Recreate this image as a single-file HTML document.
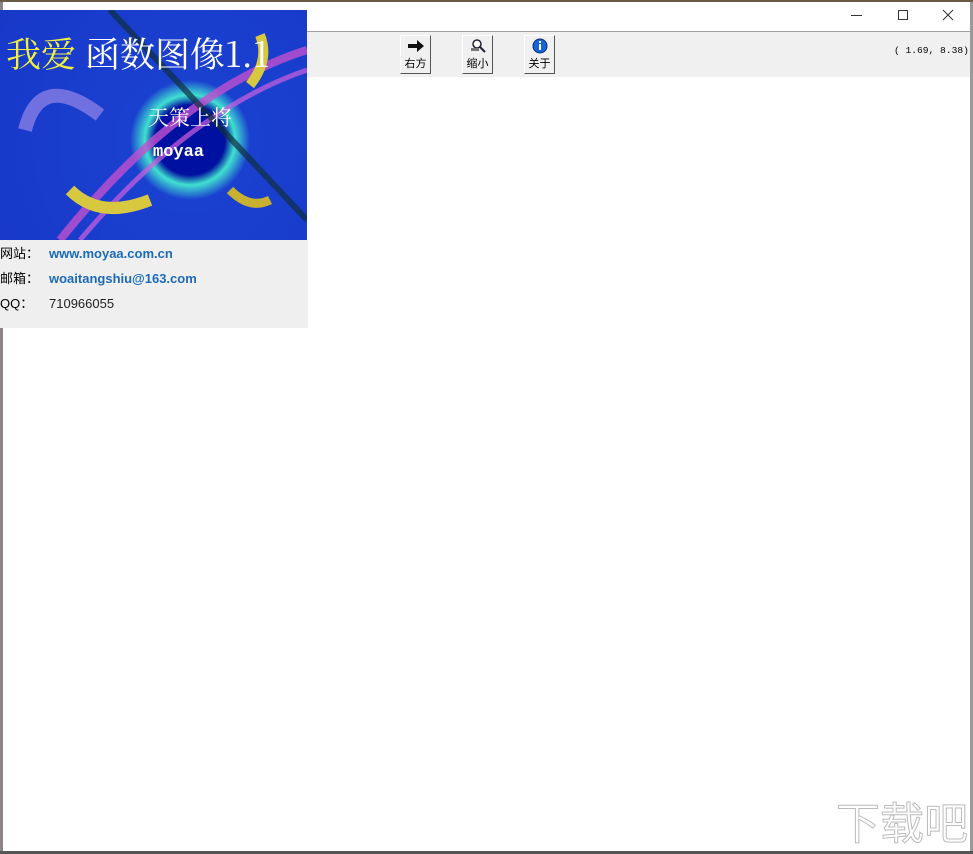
<!DOCTYPE html>
<html><head><meta charset="utf-8"><style>
*{margin:0;padding:0;box-sizing:border-box}
body{width:973px;height:854px;overflow:hidden;background:#fff;position:relative;font-family:"Liberation Sans","Noto Sans CJK SC",sans-serif}
.abs{position:absolute}
.btn{position:absolute;top:35px;width:31px;height:39px;background:#f0f0f0;border:1px solid;border-color:#fff #555 #555 #fff;font-size:11px;text-align:center;color:#000}
.btn .lbl{position:absolute;bottom:2px;left:0;right:0;line-height:13px}
.info{font-size:13px;position:absolute;left:0;line-height:16px;white-space:nowrap}
</style></head><body>
<div class="abs" style="left:0;top:0;width:973px;height:2px;background:#6b5a45"></div>
<div class="abs" style="left:0;top:2px;width:3px;height:852px;background:#8a8580"></div>
<div class="abs" style="left:970px;top:2px;width:3px;height:852px;background:#9a9a9a"></div>
<div class="abs" style="left:0;top:851px;width:973px;height:3px;background:#555"></div>
<div class="abs" style="left:3px;top:31px;width:967px;height:1px;background:#a0a0a0"></div>
<div class="abs" style="left:3px;top:32px;width:967px;height:45px;background:#f0f0f0"></div>
<div class="abs" style="left:851px;top:15px;width:11px;height:1px;background:#333"></div>
<div class="abs" style="left:898px;top:10px;width:10px;height:10px;border:1px solid #333"></div>
<svg class="abs" style="left:942px;top:9px" width="12" height="12"><path d="M1 1L11 11M11 1L1 11" stroke="#333" stroke-width="1"/></svg>
<div class="btn" style="left:400px"><svg width="20" height="14" style="margin-top:3px" viewBox="0 0 20 14"><path d="M2 5h9V1l7 6-7 6V9H2z" fill="#111"/></svg><div class="lbl">右方</div></div>
<div class="btn" style="left:462px"><svg width="20" height="16" style="margin-top:2px" viewBox="0 0 20 16"><circle cx="9" cy="6" r="4" fill="#fff" stroke="#223" stroke-width="1.5"/><path d="M12 9l5 5" stroke="#223" stroke-width="2"/><rect x="3" y="10" width="8" height="3" fill="#777"/></svg><div class="lbl">缩小</div></div>
<div class="btn" style="left:524px"><svg width="18" height="16" style="margin-top:2px" viewBox="0 0 18 16"><circle cx="9" cy="8" r="7" fill="#1565d8" stroke="#0a2a7a"/><rect x="8" y="6" width="2" height="6" fill="#fff"/><rect x="8" y="3" width="2" height="2" fill="#fff"/></svg><div class="lbl">关于</div></div>
<div class="abs" style="left:894px;top:45px;font-family:'Liberation Mono',monospace;font-size:9.6px;color:#000;white-space:nowrap">( 1.69, 8.38)</div>
<div class="abs" style="left:0;top:10px;width:307px;height:230px;overflow:hidden;background:radial-gradient(circle at 190px 130px,#0010a0 0,#0010a0 35px,#40e0d0 45px,#1a40d0 60px,#1838c8 100%)">
<svg class="abs" style="left:0;top:0" width="307" height="230"><path d="M60 230 Q180 80 307 40" stroke="#c050d0" stroke-width="8" fill="none" opacity=".8"/><path d="M80 230 Q190 100 307 60" stroke="#d060e0" stroke-width="5" fill="none" opacity=".7"/><path d="M110 0 L307 210" stroke="#103040" stroke-width="6" opacity=".7"/><path d="M25 120 Q40 60 100 105" stroke="#7070e0" stroke-width="14" fill="none"/><path d="M70 180 Q100 210 150 190" stroke="#d8c840" stroke-width="12" fill="none"/><path d="M260 25 Q270 50 250 75" stroke="#d8c840" stroke-width="10" fill="none"/><path d="M230 180 Q250 200 270 190" stroke="#c8b030" stroke-width="9" fill="none"/></svg>
<div class="abs" style="left:6px;top:22px;font-family:'Noto Serif CJK SC',serif;font-size:35px;color:#fff;white-space:nowrap;line-height:42px"><span style="color:#f0f040">我爱</span> 函数图像1.1</div>
<div class="abs" style="left:148px;top:92px;font-family:'Noto Serif CJK SC',serif;font-size:21px;color:#fff;white-space:nowrap">天策上将</div>
<div class="abs" style="left:153px;top:133px;font-family:'Liberation Mono',monospace;font-weight:bold;font-size:17px;color:#fff">moyaa</div>
</div>
<div class="abs" style="left:0;top:240px;width:308px;height:88px;background:#efefef"></div>
<div class="info" style="top:246px">网站：</div>
<div class="info" style="top:271px">邮箱：</div>
<div class="info" style="top:296px">QQ：</div>
<div class="info" style="left:49px;top:246px;color:#1a6ab8;font-weight:bold">www.moyaa.com.cn</div>
<div class="info" style="left:49px;top:271px;color:#1a6ab8;font-weight:bold">woaitangshiu@163.com</div>
<div class="info" style="left:49px;top:296px;color:#222">710966055</div>
<div class="abs" style="left:836px;top:795px;font-size:44px;color:#fff;-webkit-text-stroke:1px #bbb;font-family:'Noto Sans CJK SC',sans-serif;line-height:50px;white-space:nowrap">下载吧</div>
</body></html>
